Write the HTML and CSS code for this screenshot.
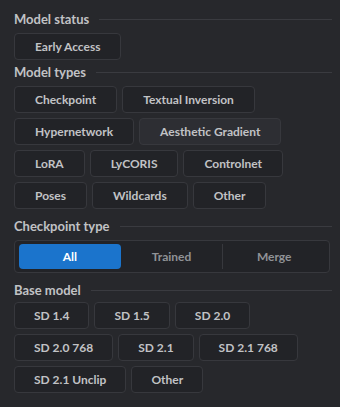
FILE: index.html
```html
<!DOCTYPE html>
<html lang="en">
<head>
    <meta charset="UTF-8">
    <meta name="viewport" content="width=device-width, initial-scale=1.0">
    <title>Model filters</title>
    <link rel="stylesheet" href="styles.css">
</head>
<body>
    <div class="filters">
        <div class="section first">
            <div class="section-label">Model status</div>
            <div class="chips">
                <button class="chip">Early Access</button>
            </div>
        </div>

        <div class="section tight">
            <div class="section-label">Model types</div>
            <div class="chips">
                <button class="chip">Checkpoint</button>
                <button class="chip">Textual Inversion</button>
                <button class="chip">Hypernetwork</button>
                <button class="chip hover">Aesthetic Gradient</button>
                <button class="chip">LoRA</button>
                <button class="chip">LyCORIS</button>
                <button class="chip">Controlnet</button>
                <button class="chip">Poses</button>
                <button class="chip">Wildcards</button>
                <button class="chip">Other</button>
            </div>
        </div>

        <div class="section">
            <div class="section-label">Checkpoint type</div>
            <div class="segmented">
                <button class="segment active">All</button>
                <button class="segment">Trained</button>
                <button class="segment divided">Merge</button>
            </div>
        </div>

        <div class="section">
            <div class="section-label short">Base model</div>
            <div class="chips base">
                <button class="chip">SD 1.4</button>
                <button class="chip">SD 1.5</button>
                <button class="chip">SD 2.0</button>
                <button class="chip">SD 2.0 768</button>
                <button class="chip">SD 2.1</button>
                <button class="chip">SD 2.1 768</button>
                <button class="chip">SD 2.1 Unclip</button>
                <button class="chip">Other</button>
            </div>
        </div>
    </div>
</body>
</html>
```

FILE: styles.css
```css
body {
    margin: 0;
    padding: 11px 8px 0 14px;
    background-color: #27282c;
    font-family: Lato, "Liberation Sans", Arial, sans-serif;
    color: #c1c2c5;
}
.section {
    margin-top: 9px;
}
.section.first {
    margin-top: 0;
}
.section.tight {
    margin-top: 4px;
}
.section-label {
    display: flex;
    align-items: center;
    gap: 10px;
    font-size: 13px;
    font-weight: 700;
    line-height: 16px;
    height: 16px;
    margin-bottom: 6px;
    color: #c1c2c5;
}
.section-label.short {
    margin-bottom: 4px;
}
.section-label::after {
    content: "";
    flex: 1;
    height: 1px;
    background: #3a3b40;
}
.chips {
    display: flex;
    flex-wrap: wrap;
    gap: 5px;
}
.chip {
    height: 27px;
    padding: 0 20px;
    background: #222327;
    border: 1px solid #37383d;
    border-radius: 4px;
    color: #c1c2c5;
    font-family: inherit;
    font-size: 12px;
    font-weight: 700;
    cursor: pointer;
}
.chips.base .chip {
    padding: 0 19px;
}
.chip.hover {
    background: #2d2e33;
}
.segmented {
    display: flex;
    width: 316px;
    box-sizing: border-box;
    padding: 3px 4px;
    background: #222327;
    border: 1px solid #37383d;
    border-radius: 4px;
}
.segment {
    flex: 1;
    height: 25px;
    background: none;
    border: none;
    border-radius: 4px;
    color: #909296;
    font-family: inherit;
    font-size: 12px;
    font-weight: 700;
}
.segment.active {
    background: #1b74cc;
    color: #fff;
}
.segment.divided {
    border-left: 1px solid #37383d;
    border-radius: 0;
}
```
